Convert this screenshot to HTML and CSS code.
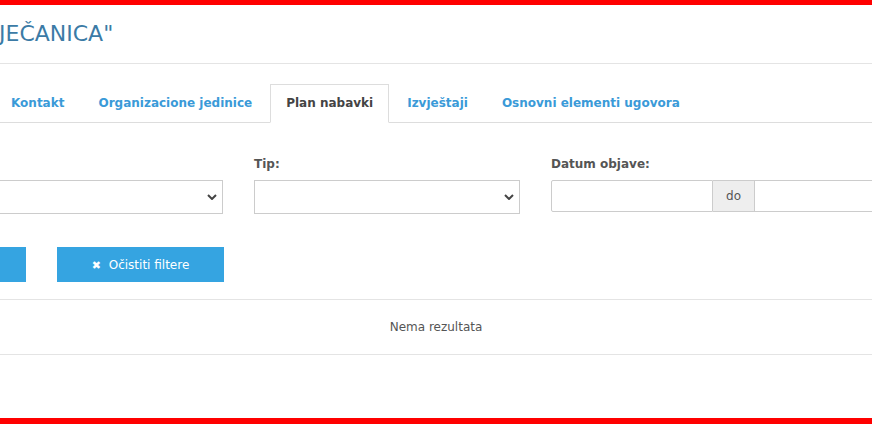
FILE: index.html
```html
<!DOCTYPE html>
<html lang="hr">
<head>
    <meta charset="UTF-8">
    <title>Plan nabavki</title>
    <link rel="stylesheet" href="styles.css">
</head>
<body>
    <div class="page">
        <header class="page-header">
            <h1>JEČANICA"</h1>
        </header>

        <ul class="tabs">
            <li><a href="#">Kontakt</a></li>
            <li><a href="#">Organizacione jedinice</a></li>
            <li class="active"><a href="#">Plan nabavki</a></li>
            <li><a href="#">Izvještaji</a></li>
            <li><a href="#">Osnovni elementi ugovora</a></li>
        </ul>

        <form class="filters">
            <div class="filter-row">
                <div class="field">
                    <label>&nbsp;</label>
                    <div class="select">
                        <svg class="chevron" viewBox="0 0 10 6" width="10" height="6"><path d="M1 1l4 4 4-4" fill="none" stroke="#444" stroke-width="2"/></svg>
                    </div>
                </div>
                <div class="field">
                    <label>Tip:</label>
                    <div class="select">
                        <svg class="chevron" viewBox="0 0 10 6" width="10" height="6"><path d="M1 1l4 4 4-4" fill="none" stroke="#444" stroke-width="2"/></svg>
                    </div>
                </div>
                <div class="field field-wide">
                    <label>Datum objave:</label>
                    <div class="input-group">
                        <input type="text" class="date-input">
                        <span class="addon">do</span>
                        <input type="text" class="date-input date-to">
                    </div>
                </div>
            </div>

            <div class="actions">
                <button type="button" class="btn"></button>
                <button type="button" class="btn"><span class="icon">✖</span> Očistiti filtere</button>
            </div>
        </form>

        <table class="results">
            <tr><td>Nema rezultata</td></tr>
        </table>
    </div>
    <div class="bottom-bar"></div>
</body>
</html>
```

FILE: styles.css
```css
html, body {
    margin: 0;
    padding: 0;
}

body {
    font-family: "DejaVu Sans", Verdana, sans-serif;
    background: #fff;
    color: #555;
    height: 424px;
    overflow: hidden;
    border-top: 5px solid #ff0000;
    box-sizing: border-box;
    display: flex;
    flex-direction: column;
}

.page {
    flex: 1;
    overflow: hidden;
}

.page-header {
    height: 58px;
    display: flex;
    align-items: center;
    border-bottom: 1px solid #e4e4e4;
}

.page-header h1 {
    margin: 0 0 2px -1px;
    font-size: 22px;
    font-weight: normal;
    color: #3b7ba6;
}

/* tabs */
.tabs {
    list-style: none;
    margin: 20px 0 0;
    padding: 0;
    display: flex;
    border-bottom: 1px solid #ddd;
}

.tabs li {
    margin-right: 2px;
    margin-bottom: -1px;
    border: 1px solid transparent;
}

.tabs li:first-child {
    margin-left: -5px;
}

.tabs a {
    display: block;
    padding: 9px 15px;
    line-height: 19px;
    font-size: 12px;
    font-weight: bold;
    color: #3a9ad8;
    text-decoration: none;
}

.tabs li.active {
    border-color: #ddd;
    border-bottom-color: #fff;
    background: #fff;
}

.tabs li.active a {
    color: #444;
}

/* filters */
.filters {
    margin-left: -43px;
    padding-top: 32px;
}

.filter-row {
    display: grid;
    grid-template-columns: 266px 266px 400px;
    column-gap: 31px;
}

.field label {
    display: block;
    font-size: 12px;
    font-weight: bold;
    color: #555;
    height: 18px;
    line-height: 18px;
    margin-bottom: 7px;
}

.select {
    height: 34px;
    border: 1px solid #ccc;
    box-sizing: border-box;
    display: flex;
    align-items: center;
    justify-content: flex-end;
    padding-right: 5px;
}

.input-group {
    display: flex;
    height: 32px;
}

.date-input {
    flex-shrink: 0;
    width: 162px;
    height: 32px;
    box-sizing: border-box;
    border: 1px solid #ccc;
    border-radius: 2px 0 0 2px;
    margin: 0;
    padding: 0 8px;
    font: inherit;
}

.date-input.date-to {
    width: 190px;
    border-left: 0;
    border-radius: 0;
}

.addon {
    flex-shrink: 0;
    width: 42px;
    box-sizing: border-box;
    background: #eee;
    border: 1px solid #ccc;
    border-left: 0;
    display: flex;
    align-items: center;
    justify-content: center;
    font-size: 12px;
    color: #555;
}

.actions {
    display: flex;
    gap: 31px;
    margin-top: 33px;
    margin-left: -98px;
}

.btn {
    width: 167px;
    height: 35px;
    border: 0;
    background: #35a4e1;
    color: #fff;
    font-family: "DejaVu Sans", Verdana, sans-serif;
    font-size: 12px;
    padding: 0;
}

.btn .icon {
    font-size: 11px;
    margin-right: 4px;
}

/* results */
.results {
    width: 100%;
    border-collapse: collapse;
    margin-top: 17px;
}

.results td {
    height: 54px;
    border-top: 1px solid #e4e4e4;
    border-bottom: 1px solid #e4e4e4;
    text-align: center;
    font-size: 12px;
    color: #555;
    padding: 0;
}

.bottom-bar {
    height: 6px;
    background: #ff0000;
}
```
